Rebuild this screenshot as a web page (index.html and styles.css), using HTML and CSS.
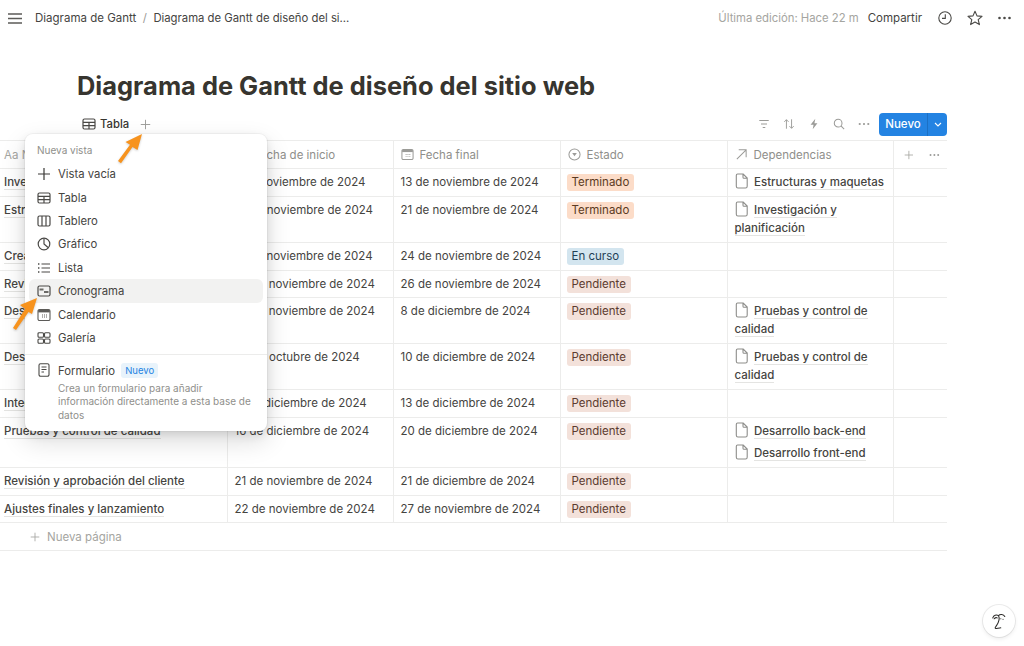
FILE: index.html
```html
<!DOCTYPE html>
<html lang="es">
<head>
    <meta charset="UTF-8">
    <title>Diagrama de Gantt de diseño del sitio web</title>
    <link rel="stylesheet" href="styles.css">
</head>
<body>
    <svg class="defs" width="0" height="0">
        <symbol id="doc" viewBox="0 0 14 16"><path d="M2.6 1h5.6l4 4v8.2c0 1-.7 1.8-1.7 1.8H3c-1 0-1.7-.8-1.7-1.8V2.6C1.3 1.700 1.800 1 2.600 1zM8 1.200v3c0 .7.400 1.100 1 1.100h3" fill="none" stroke="#8d8d8a" stroke-width="1.100"/></symbol>
        <symbol id="grid" viewBox="0 0 14 14"><path d="M2.500 2h9A1.500 1.500 0 0 1 13 3.500v7a1.500 1.500 0 0 1-1.500 1.500h-9A1.500 1.500 0 0 1 1 10.500v-7A1.500 1.500 0 0 1 2.500 2zM1 5.300h12M1 8.700h12M7 5.300V12" fill="none" stroke="#4a4946" stroke-width="1.200"/></symbol>
        <symbol id="dots" viewBox="0 0 14 4"><circle cx="2" cy="2" r="1.300"/><circle cx="7" cy="2" r="1.300"/><circle cx="12" cy="2" r="1.300"/></symbol>
        <symbol id="plus" viewBox="0 0 14 14"><path d="M7 1v12M1 7h12" fill="none" stroke="currentColor" stroke-width="1.200"/></symbol>
        <symbol id="cal" viewBox="0 0 14 14"><path d="M2.500 1.500h9A1.500 1.500 0 0 1 13 3v8a1.500 1.500 0 0 1-1.500 1.500h-9A1.500 1.500 0 0 1 1 11V3a1.500 1.500 0 0 1 1.500-1.500z" fill="none" stroke="currentColor" stroke-width="1.100"/><path d="M1.200 2h11.600v2.400H1.200z" fill="currentColor"/><path d="M5 6.500h1v1H5zM7 6.500h1v1H7zM9 6.500h1v1H9zM5 8.500h1v1H5zM7 8.500h1v1H7zM9 8.500h1v1H9z" fill="currentColor"/></symbol>
    </svg>

    <header class="topbar">
        <div class="crumbs">
            <svg class="burger" viewBox="0 0 14 11"><path d="M0 1h14M0 5.500h14M0 10h14" stroke="#5c5b58" stroke-width="1.300"/></svg>
            <span class="crumb-first">Diagrama de Gantt</span>
            <span class="crumb-sep">/</span>
            <span class="crumb-last">Diagrama de Gantt de diseño del si...</span>
        </div>
        <div class="top-actions">
            <span class="edited">Última edición: Hace 22 m</span>
            <span class="share">Compartir</span>
            <svg class="top-icon clock" viewBox="0 0 14 14"><circle cx="7" cy="7" r="6.200" fill="none" stroke="#4a4946" stroke-width="1.100"/><path d="M7.300 3.200v4.200H4" fill="none" stroke="#4a4946" stroke-width="1.100"/></svg>
            <svg class="top-icon star" viewBox="0 0 16 16"><path d="M8 1.300l2 4.600 5 .5-3.800 3.300 1.200 4.900L8 12.100l-4.400 2.500 1.200-4.900L1 6.400l5-.5z" fill="none" stroke="#4a4946" stroke-width="1.100" stroke-linejoin="round"/></svg>
            <svg class="top-more" viewBox="0 0 14 4" fill="#4a4946"><use href="#dots"/></svg>
        </div>
    </header>

    <main class="page">
        <h1 class="title">Diagrama de Gantt de diseño del sitio web</h1>

        <div class="views">
            <div class="tabs">
                <svg class="tab-icon"><use href="#grid"/></svg>
                <span class="tab-name">Tabla</span>
                <svg class="tab-add"><use href="#plus"/></svg>
            </div>
            <div class="tools">
                <svg class="tool" viewBox="0 0 14 14"><path d="M1.500 3h11M3.500 7h7M5.500 11h3" stroke="#9b9b98" stroke-width="1.200"/></svg>
                <svg class="tool" viewBox="0 0 14 14"><path d="M4 12.500V2M1.500 4.500L4 2l2.500 2.500M10 1.500V12M7.500 9.500L10 12l2.500-2.500" fill="none" stroke="#9b9b98" stroke-width="1.100"/></svg>
                <svg class="tool" viewBox="0 0 14 14"><path d="M8.500 1L3 8h3.500L5.500 13 11 6H7.500z" fill="#9b9b98"/></svg>
                <svg class="tool" viewBox="0 0 14 14"><circle cx="6" cy="6" r="4.500" fill="none" stroke="#9b9b98" stroke-width="1.200"/><path d="M9.300 9.300L13 13" stroke="#9b9b98" stroke-width="1.200"/></svg>
                <svg class="tool-more" viewBox="0 0 14 4" fill="#9b9b98"><use href="#dots"/></svg>
                <div class="new-btn">
                    <span class="new-label">Nuevo</span>
                    <span class="new-arrow"><svg viewBox="0 0 8 5"><path d="M1 1l3 3 3-3" fill="none" stroke="#fff" stroke-width="1.100"/></svg></span>
                </div>
            </div>
        </div>

        <table class="db">
            <colgroup>
                <col class="c-name"><col class="c-a"><col class="c-b"><col class="c-b"><col class="c-a"><col class="c-end">
            </colgroup>
            <thead>
                <tr>
                    <th class="first">Aa Nombre</th>
                    <th><svg class="th-icon"><use href="#cal"/></svg>Fecha de inicio</th>
                    <th><svg class="th-icon"><use href="#cal"/></svg>Fecha final</th>
                    <th><svg class="th-icon" viewBox="0 0 14 14"><circle cx="7" cy="7" r="6" fill="none" stroke="currentColor" stroke-width="1.100"/><path d="M4.500 5.500h5L7 9z" fill="currentColor"/></svg>Estado</th>
                    <th><svg class="th-icon" viewBox="0 0 14 14"><path d="M2 12L12 2M4 2h8v8" fill="none" stroke="currentColor" stroke-width="1.100"/></svg>Dependencias</th>
                    <th class="th-end">
                        <span class="th-end-in">
                            <svg class="end-plus"><use href="#plus"/></svg>
                            <svg class="end-dots" viewBox="0 0 14 4" fill="#9b9b98"><use href="#dots"/></svg>
                        </span>
                    </th>
                </tr>
            </thead>
            <tbody>
                <tr class="r-28">
                    <td class="first"><span class="link">Investigación y planificación</span></td>
                    <td>1 de noviembre de 2024</td>
                    <td>13 de noviembre de 2024</td>
                    <td><span class="pill done">Terminado</span></td>
                    <td><svg class="doc"><use href="#doc"/></svg><span class="link">Estructuras y maquetas</span></td>
                    <td></td>
                </tr>
                <tr class="r-46">
                    <td class="first"><span class="link">Estructuras y maquetas</span></td>
                    <td>14 de noviembre de 2024</td>
                    <td>21 de noviembre de 2024</td>
                    <td><span class="pill done">Terminado</span></td>
                    <td><svg class="doc"><use href="#doc"/></svg><span class="link">Investigación y planificación</span></td>
                    <td></td>
                </tr>
                <tr class="r-28">
                    <td class="first"><span class="link">Creación de contenido</span></td>
                    <td>18 de noviembre de 2024</td>
                    <td>24 de noviembre de 2024</td>
                    <td><span class="pill doing">En curso</span></td>
                    <td></td>
                    <td></td>
                </tr>
                <tr class="r-27">
                    <td class="first"><span class="link">Revisión de contenido</span></td>
                    <td>25 de noviembre de 2024</td>
                    <td>26 de noviembre de 2024</td>
                    <td><span class="pill todo">Pendiente</span></td>
                    <td></td>
                    <td></td>
                </tr>
                <tr class="r-46">
                    <td class="first"><span class="link">Desarrollo front-end</span></td>
                    <td>22 de noviembre de 2024</td>
                    <td>8 de diciembre de 2024</td>
                    <td><span class="pill todo">Pendiente</span></td>
                    <td><svg class="doc"><use href="#doc"/></svg><span class="link">Pruebas y control de calidad</span></td>
                    <td></td>
                </tr>
                <tr class="r-46">
                    <td class="first"><span class="link">Desarrollo back-end</span></td>
                    <td>30 de octubre de 2024</td>
                    <td>10 de diciembre de 2024</td>
                    <td><span class="pill todo">Pendiente</span></td>
                    <td><svg class="doc"><use href="#doc"/></svg><span class="link">Pruebas y control de calidad</span></td>
                    <td></td>
                </tr>
                <tr class="r-28">
                    <td class="first"><span class="link">Integración de sistemas</span></td>
                    <td>11 de diciembre de 2024</td>
                    <td>13 de diciembre de 2024</td>
                    <td><span class="pill todo">Pendiente</span></td>
                    <td></td>
                    <td></td>
                </tr>
                <tr class="r-50">
                    <td class="first"><span class="link">Pruebas y control de calidad</span></td>
                    <td>16 de diciembre de 2024</td>
                    <td>20 de diciembre de 2024</td>
                    <td><span class="pill todo">Pendiente</span></td>
                    <td>
                        <div class="dep-row"><svg class="doc"><use href="#doc"/></svg><span class="link">Desarrollo back-end</span></div>
                        <div class="dep-row"><svg class="doc"><use href="#doc"/></svg><span class="link">Desarrollo front-end</span></div>
                    </td>
                    <td></td>
                </tr>
                <tr class="r-28">
                    <td class="first"><span class="link">Revisión y aprobación del cliente</span></td>
                    <td>21 de noviembre de 2024</td>
                    <td>21 de diciembre de 2024</td>
                    <td><span class="pill todo">Pendiente</span></td>
                    <td></td>
                    <td></td>
                </tr>
                <tr class="r-27">
                    <td class="first"><span class="link">Ajustes finales y lanzamiento</span></td>
                    <td>22 de noviembre de 2024</td>
                    <td>27 de noviembre de 2024</td>
                    <td><span class="pill todo">Pendiente</span></td>
                    <td></td>
                    <td></td>
                </tr>
            </tbody>
        </table>

        <div class="new-page">
            <svg class="new-page-plus"><use href="#plus"/></svg>
            <span>Nueva página</span>
        </div>
    </main>

    <!-- popup de vistas -->
    <div class="menu">
        <div class="menu-head">Nueva vista</div>
        <div class="menu-item">
            <svg class="menu-icon plus-icon"><use href="#plus"/></svg>Vista vacía
        </div>
        <div class="menu-item">
            <svg class="menu-icon"><use href="#grid"/></svg>Tabla
        </div>
        <div class="menu-item">
            <svg class="menu-icon" viewBox="0 0 14 14"><path d="M2.500 2h9A1.500 1.500 0 0 1 13 3.500v7a1.500 1.500 0 0 1-1.500 1.500h-9A1.500 1.500 0 0 1 1 10.500v-7A1.500 1.500 0 0 1 2.500 2zM5 2v10M9 2v10" fill="none" stroke="#4a4946" stroke-width="1.200"/></svg>Tablero
        </div>
        <div class="menu-item">
            <svg class="menu-icon" viewBox="0 0 14 14"><circle cx="7" cy="7" r="5.800" fill="none" stroke="#4a4946" stroke-width="1.200"/><path d="M7 1.500V7l4 3.500" fill="none" stroke="#4a4946" stroke-width="1.200"/></svg>Gráfico
        </div>
        <div class="menu-item">
            <svg class="menu-icon" viewBox="0 0 14 14"><path d="M4.500 3H13M4.500 7H13M4.500 11H13" stroke="#4a4946" stroke-width="1.200"/><path d="M1 2.300h1.400v1.400H1zM1 6.300h1.400v1.400H1zM1 10.300h1.400v1.400H1z" fill="#4a4946"/></svg>Lista
        </div>
        <div class="menu-item active">
            <svg class="menu-icon" viewBox="0 0 14 14"><path d="M2.500 2h9A1.500 1.500 0 0 1 13 3.500v7a1.500 1.500 0 0 1-1.500 1.500h-9A1.500 1.500 0 0 1 1 10.500v-7A1.500 1.500 0 0 1 2.500 2z" fill="none" stroke="#4a4946" stroke-width="1.200"/><path d="M2.500 4.500h4v2h-4zM7 7h4.500v2H7z" fill="#6b6a67"/></svg>Cronograma
        </div>
        <div class="menu-item">
            <svg class="menu-icon cal-icon"><use href="#cal"/></svg>Calendario
        </div>
        <div class="menu-item">
            <svg class="menu-icon" viewBox="0 0 14 14"><path d="M2 1.700h3.500a1 1 0 0 1 1 1v2.600a1 1 0 0 1-1 1H2a1 1 0 0 1-1-1V2.700a1 1 0 0 1 1-1zM8.500 1.700H12a1 1 0 0 1 1 1v2.600a1 1 0 0 1-1 1H8.500a1 1 0 0 1-1-1V2.700a1 1 0 0 1 1-1zM2 8h3.500a1 1 0 0 1 1 1v2.300a1 1 0 0 1-1 1H2a1 1 0 0 1-1-1V9a1 1 0 0 1 1-1zM8.500 8H12a1 1 0 0 1 1 1v2.300a1 1 0 0 1-1 1H8.500a1 1 0 0 1-1-1V9a1 1 0 0 1 1-1z" fill="none" stroke="#4a4946" stroke-width="1.100"/></svg>Galería
        </div>
        <div class="menu-sep"></div>
        <div class="menu-form">
            <svg class="menu-icon" viewBox="0 0 14 14"><path d="M3.500 .8h7A1.500 1.500 0 0 1 12 2.300v9.400a1.500 1.500 0 0 1-1.500 1.500h-7A1.500 1.500 0 0 1 2 11.700V2.300A1.500 1.500 0 0 1 3.500 .8zM4.500 4h5M4.500 6.500h5M4.500 9h2.500" fill="none" stroke="#4a4946" stroke-width="1.100"/></svg>
            <div class="form-text">
                <div class="form-title">Formulario <span class="badge">Nuevo</span></div>
                <div class="form-desc">Crea un formulario para añadir información directamente a esta base de datos</div>
            </div>
        </div>
    </div>

    <!-- flechas naranjas -->
    <svg class="arrow arrow-top" viewBox="0 0 26 32"><path d="M25 1L8.500 9l4.500 2.700L1 28l3 2.300L15.500 14l5 3z" fill="#f7931e"/></svg>
    <svg class="arrow arrow-side" viewBox="0 0 26 34"><path d="M25 1L8 8l5 4L1 31l3 2L16.500 15l3.500 2z" fill="#f7931e"/></svg>

    <div class="help">
        <svg viewBox="0 0 18 20"><path d="M2 6.500C3 3.500 6 2.500 8.500 4c1.500-2 5.500-2 7 1M8.500 4C10 7 9 11 6 15.500c-1 1.500-1.800 2.300-1 2.800 1.500.5 4-.2 6-.6M3.500 7.500c1-1 2.500-1.500 3.500-1M11 7.500h.1M13.500 8h.1" fill="none" stroke="#2d2c2a" stroke-width="1.200" stroke-linecap="round"/></svg>
    </div>
</body>
</html>
```

FILE: styles.css
```css
* {
    box-sizing: border-box;
}

body {
    margin: 0;
    background-color: #fff;
    color: #37352f;
    font-family: Inter, "Liberation Sans", sans-serif;
    font-size: 11.5px;
    overflow: hidden;
}

.defs {
    position: absolute;
}

/* top bar */
.topbar {
    display: flex;
    justify-content: space-between;
    align-items: center;
    height: 36px;
    padding: 0 12px 0 8px;
    color: #45443f;
}

.crumbs {
    display: flex;
    align-items: center;
}

.burger {
    width: 14px;
    height: 11px;
    margin-right: 13px;
}

.crumb-sep {
    margin: 0 6.5px;
    color: #9b9a97;
}

.crumb-last {
    font-size: 11.3px;
}

.top-actions {
    display: flex;
    align-items: center;
}

.edited {
    color: #a5a5a1;
    font-size: 11.3px;
    margin-right: 9px;
}

.share {
    margin-right: 16px;
}

.top-icon {
    width: 14px;
    height: 14px;
}

.clock {
    margin-right: 15px;
}

.star {
    width: 16px;
    height: 16px;
    margin-right: 14px;
}

.top-more {
    width: 15px;
    height: 4px;
}

/* title and views */
.page {
    width: 947px;
}

.title {
    margin: 0;
    padding: 33px 0 0 77px;
    font-size: 25.45px;
    line-height: 34px;
    font-weight: 700;
    color: #37352f;
}

.views {
    display: flex;
    justify-content: space-between;
    align-items: center;
    height: 24px;
    margin-top: 9px;
    padding-left: 82px;
}

.tabs {
    display: flex;
    align-items: center;
}

.tab-icon {
    width: 14px;
    height: 14px;
    margin-right: 4px;
}

.tab-name {
    font-weight: 500;
    font-size: 11.3px;
}

.tab-add {
    width: 11px;
    height: 11px;
    margin-left: 11px;
    color: #9b9b98;
}

.tools {
    display: flex;
    align-items: center;
}

.tool {
    width: 12px;
    height: 12px;
    margin-right: 13px;
}

.tool-more {
    width: 12px;
    height: 4px;
    margin-right: 9px;
}

.new-btn {
    display: flex;
    align-items: center;
    width: 68px;
    height: 23px;
    border-radius: 4px;
    background-color: #2383e2;
    color: #fff;
    font-size: 11.5px;
    font-weight: 500;
}

.new-label {
    width: 49px;
    line-height: 23px;
    text-align: center;
    border-right: 1px solid #1c70c4;
}

.new-arrow {
    display: flex;
    flex: 1;
    justify-content: center;
}

.new-arrow svg {
    width: 8px;
    height: 5px;
}

/* table */
.db {
    width: 947px;
    border-collapse: collapse;
    table-layout: fixed;
    margin-top: 4px;
}

.c-name {
    width: 227px;
}

.c-a {
    width: 166px;
}

.c-b {
    width: 167px;
}

.c-end {
    width: 54px;
}

.db th,
.db td {
    padding: 4px 7px 0;
    border: 1px solid #ececeb;
    vertical-align: top;
    text-align: left;
    font-weight: 400;
    line-height: 18px;
    color: #45443f;
}

.db tr > :first-child {
    border-left: none;
}

.db tr > :last-child {
    border-right: none;
}

.db th {
    height: 28px;
    padding-top: 5px;
    color: #8f8f8b;
    white-space: nowrap;
}

.db .first {
    padding-left: 4px;
    font-weight: 500;
}

.db th.first {
    color: #a5a5a1;
    font-weight: 400;
}

.th-icon {
    width: 13px;
    height: 13px;
    margin-right: 6px;
    vertical-align: -2px;
    color: #9b9b98;
}

.th-end-in {
    display: flex;
    align-items: center;
    height: 18px;
}

.end-plus {
    width: 10px;
    height: 10px;
    margin: 0 16px 0 3px;
    color: #a5a5a1;
}

.end-dots {
    width: 11px;
    height: 4px;
}

.r-27 {
    height: 27px;
}

.r-28 {
    height: 28px;
}

.r-46 {
    height: 46px;
}

.r-50 {
    height: 50px;
}

.link {
    font-weight: 500;
    border-bottom: 1px solid #e4e4e2;
}

.doc {
    width: 14px;
    height: 16px;
    margin-right: 5.5px;
    vertical-align: -3px;
}

.dep-row {
    height: 22px;
}

.pill {
    display: block;
    width: fit-content;
    height: 17px;
    margin: 1px 0 0 -1px;
    padding: 0 5px;
    border-radius: 3px;
    line-height: 17px;
}

.done {
    background-color: #fcdcc8;
    color: #5b3a22;
}

.doing {
    background-color: #d3e5ef;
    color: #1f3f55;
}

.todo {
    background-color: #f3e1da;
    color: #5c3b30;
}

.new-page {
    display: flex;
    align-items: center;
    height: 28px;
    padding-left: 30px;
    border-bottom: 1px solid #ececeb;
    color: #a5a5a1;
}

.new-page-plus {
    width: 10px;
    height: 10px;
    margin-right: 7px;
}

/* popup */
.menu {
    position: absolute;
    top: 134px;
    left: 25px;
    width: 242px;
    height: 297px;
    padding: 4px;
    border-radius: 8px;
    background-color: #fff;
    box-shadow: 0 0 0 1px rgba(15, 15, 15, 0.04), 0 4px 10px rgba(15, 15, 15, 0.1), 0 10px 26px rgba(15, 15, 15, 0.14);
    font-size: 11.3px;
    color: #45443f;
}

.menu-head {
    height: 24.5px;
    padding-left: 8px;
    line-height: 24px;
    font-size: 10px;
    color: #8f8f8b;
}

.menu-item {
    display: flex;
    align-items: center;
    height: 23.4px;
    padding-left: 8px;
    border-radius: 6px;
}

.active {
    background-color: #f2f2f1;
}

.menu-icon {
    flex: none;
    width: 14px;
    height: 14px;
    margin-right: 7px;
}

.plus-icon {
    color: #3a3936;
}

.cal-icon {
    color: #5c5b58;
}

.menu-sep {
    height: 1px;
    margin: 4px -4px 6px;
    background-color: #ececeb;
}

.menu-form {
    display: flex;
    padding: 0 8px;
}

.menu-form .menu-icon {
    margin-top: 2px;
}

.form-title {
    line-height: 20px;
}

.badge {
    display: inline-block;
    height: 15px;
    margin-left: 3px;
    padding: 0 4px;
    border-radius: 3px;
    background-color: #e8f3fb;
    color: #2383e2;
    font-size: 9.5px;
    line-height: 15px;
    vertical-align: 1px;
}

.form-desc {
    margin-top: 1px;
    font-size: 10px;
    line-height: 13.5px;
    color: #8f8f8b;
}

/* arrows over the popup */
.arrow {
    position: absolute;
}

.arrow-top {
    top: 133px;
    left: 117px;
    width: 26px;
    height: 32px;
    filter: drop-shadow(0 1px 1px rgba(0, 0, 0, 0.2));
}

.arrow-side {
    top: 297px;
    left: 12px;
    width: 26px;
    height: 34px;
    filter: drop-shadow(0 1px 1px rgba(0, 0, 0, 0.2));
}

.help {
    position: fixed;
    right: 9px;
    bottom: 9px;
    display: flex;
    justify-content: center;
    align-items: center;
    width: 32px;
    height: 32px;
    border-radius: 50%;
    background-color: #fff;
    box-shadow: 0 0 0 1px rgba(15, 15, 15, 0.08), 0 2px 4px rgba(15, 15, 15, 0.08);
}

.help svg {
    width: 16px;
    height: 18px;
}
```
